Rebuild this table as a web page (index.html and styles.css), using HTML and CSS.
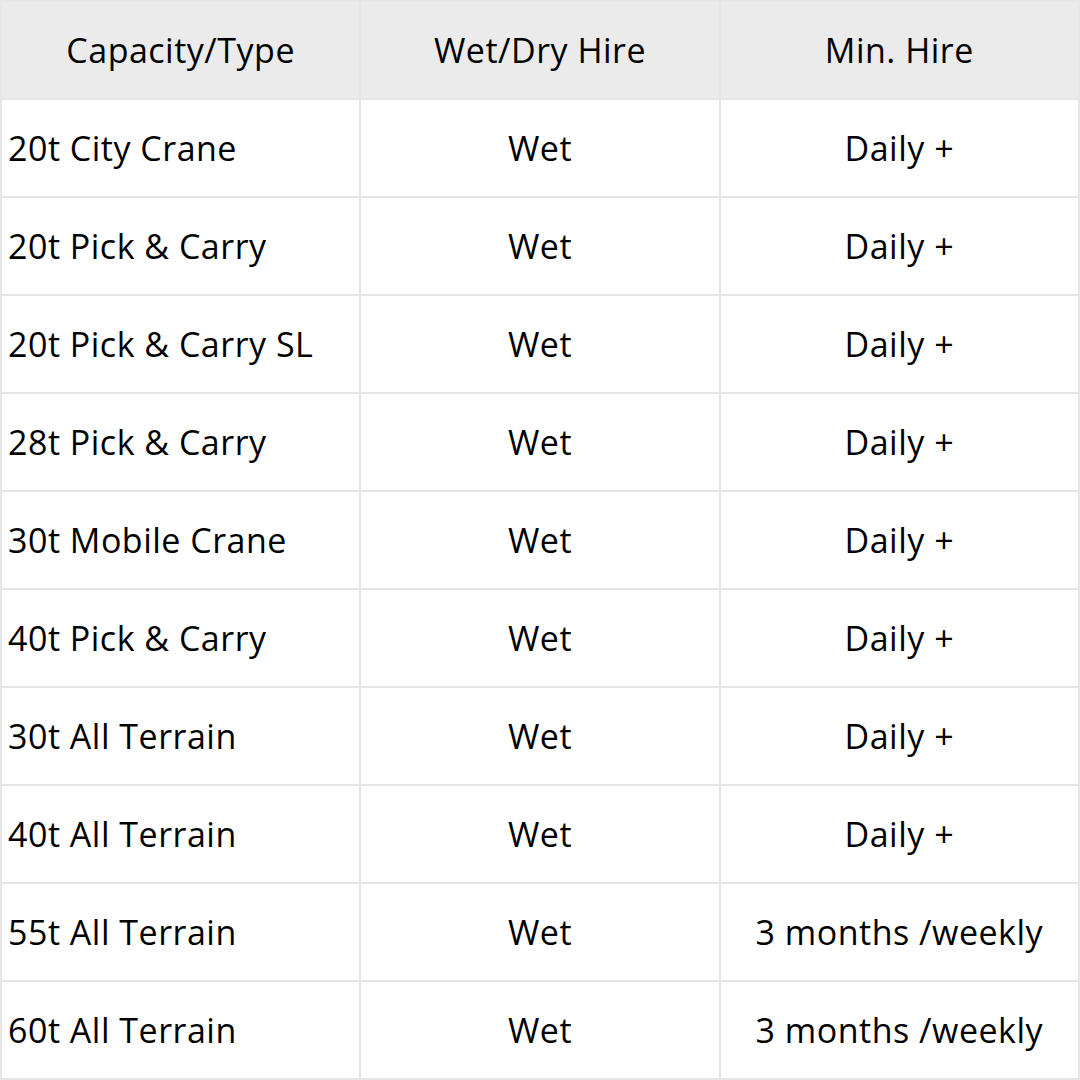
FILE: index.html
```html
<!DOCTYPE html>
<html>
<head>
<meta charset="utf-8">
<link rel="stylesheet" href="styles.css">
</head>
<body>
<table class="hire">
  <thead>
    <tr><th>Capacity/Type</th><th>Wet/Dry Hire</th><th>Min. Hire</th></tr>
  </thead>
  <tbody>
    <tr><td class="type">20t City Crane</td><td>Wet</td><td>Daily +</td></tr>
    <tr><td class="type">20t Pick &amp; Carry</td><td>Wet</td><td>Daily +</td></tr>
    <tr><td class="type">20t Pick &amp; Carry SL</td><td>Wet</td><td>Daily +</td></tr>
    <tr><td class="type">28t Pick &amp; Carry</td><td>Wet</td><td>Daily +</td></tr>
    <tr><td class="type">30t Mobile Crane</td><td>Wet</td><td>Daily +</td></tr>
    <tr><td class="type">40t Pick &amp; Carry</td><td>Wet</td><td>Daily +</td></tr>
    <tr><td class="type">30t All Terrain</td><td>Wet</td><td>Daily +</td></tr>
    <tr><td class="type">40t All Terrain</td><td>Wet</td><td>Daily +</td></tr>
    <tr><td class="type">55t All Terrain</td><td>Wet</td><td>3 months /weekly</td></tr>
    <tr><td class="type">60t All Terrain</td><td>Wet</td><td>3 months /weekly</td></tr>
  </tbody>
</table>
</body>
</html>
```
FILE: styles.css
```css
html, body {
  margin: 0;
  padding: 0;
  background: #ffffff;
}
.hire {
  width: 1080px;
  height: 1080px;
  border-collapse: collapse;
  table-layout: fixed;
  font-family: "Open Sans", "Noto Sans", sans-serif;
  font-size: 34px;
  letter-spacing: 0.5px;
  color: #000000;
}
.hire th,
.hire td {
  border: 2px solid #e6e6e6;
  height: 96px;
  padding: 0;
  text-align: center;
  vertical-align: middle;
  font-weight: 400;
  line-height: 1;
}
.hire th {
  background: #ebebeb;
}
.hire td.type {
  text-align: left;
  padding-left: 6px;
}
```
